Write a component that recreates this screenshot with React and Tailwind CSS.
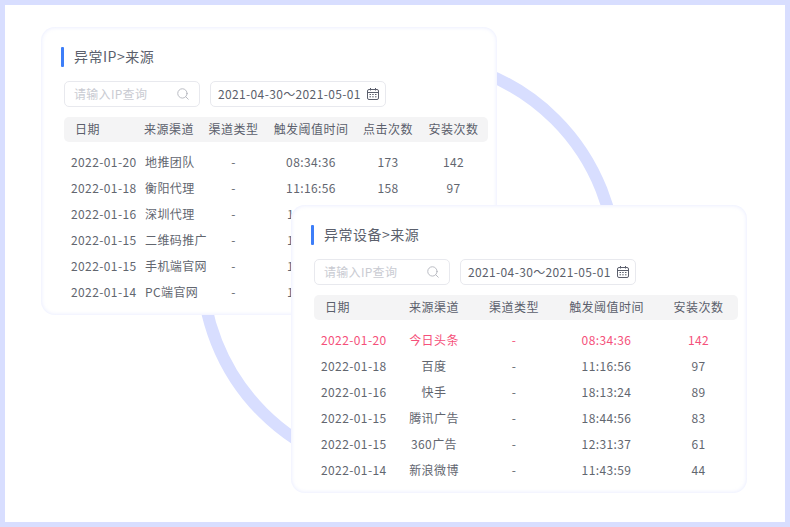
import { Search } from 'lucide-react'

// rows 3-6 of this table sit under the second card, only the first digit of the time shows
const ipRows = [
  ['2022-01-20', '地推团队', '-', '08:34:36', '173', '142'],
  ['2022-01-18', '衡阳代理', '-', '11:16:56', '158', '97'],
  ['2022-01-16', '深圳代理', '-', '1'],
  ['2022-01-15', '二维码推广', '-', '1'],
  ['2022-01-15', '手机端官网', '-', '1'],
  ['2022-01-14', 'PC端官网', '-', '1'],
]

const deviceRows = [
  ['2022-01-20', '今日头条', '-', '08:34:36', '142'],
  ['2022-01-18', '百度', '-', '11:16:56', '97'],
  ['2022-01-16', '快手', '-', '18:13:24', '89'],
  ['2022-01-15', '腾讯广告', '-', '18:44:56', '83'],
  ['2022-01-15', '360广告', '-', '12:31:37', '61'],
  ['2022-01-14', '新浪微博', '-', '11:43:59', '44'],
]

function CalendarIcon() {
  return (
    <svg width="12" height="12" viewBox="0 0 12 12" fill="none" stroke="#5b5f6c" strokeWidth="1">
      <rect x="0.5" y="1.5" width="11" height="10" rx="1.5" />
      <path d="M0.5 4.5h11M3.5 0v2.5M8.5 0v2.5" />
      <path d="M2.5 6.5h1.5M5.2 6.5h1.5M8 6.5h1.5M2.5 8.8h1.5M5.2 8.8h1.5M8 8.8h1.5" />
    </svg>
  )
}

function Toolbar() {
  return (
    <div className="mt-[14px] ml-[3px] flex gap-[10px]">
      <div className="flex h-[26px] w-[136px] items-center justify-between rounded-[5px] border border-[#e8e9ee] pl-[9px] pr-[9px] text-[12px] tracking-[0.3px] text-[#c9cbd2]">
        <span>请输入IP查询</span>
        <Search size={14} strokeWidth={1.5} color="#b0b2ba" />
      </div>
      <div className="flex h-[26px] w-[176px] items-center justify-between rounded-[5px] border border-[#e8e9ee] pl-[7px] pr-[6px] text-[12px] tracking-[0.36px] text-[#5b5f6c]">
        <span className="whitespace-nowrap">2021-04-30～2021-05-01</span>
        <CalendarIcon />
      </div>
    </div>
  )
}

function Title({ children }) {
  return (
    <div className="flex h-5 items-center">
      <div className="h-5 w-[3px] rounded-[1px] bg-[#3d7ef8]" />
      <div className="-mt-[2px] ml-[10px] text-[14px] tracking-[0.5px] text-[#5b5f6c]">{children}</div>
    </div>
  )
}

function IpCard() {
  const cols = 'grid grid-cols-[76px_58px_71px_84px_70px_61px]'
  return (
    <div className="absolute left-[41px] top-[27px] h-[288px] w-[456px] rounded-[14px] bg-white pl-[20px] pt-[20px] shadow-[inset_0_0_4px_rgba(216,222,255,0.7)]">
      <Title>异常IP&gt;来源</Title>
      <Toolbar />
      <div className={`${cols} ml-[3px] mt-[10px] h-[25px] w-[424px] items-center rounded-[5px] bg-[#f4f4f5] pb-[2px] text-center text-[12px] tracking-[0.45px] text-[#5b5f6c]`}>
        <div className="pl-[11px] text-left">日期</div>
        <div className="whitespace-nowrap">来源渠道</div>
        <div className="whitespace-nowrap">渠道类型</div>
        <div className="whitespace-nowrap">触发阈值时间</div>
        <div className="whitespace-nowrap">点击次数</div>
        <div className="whitespace-nowrap">安装次数</div>
      </div>
      <div className="ml-[3px] mt-[7px] w-[424px]">
        {ipRows.map((row) => (
          <div key={row[0] + row[1]} className={`${cols} h-[26px] items-center text-center text-[12px] tracking-[0.4px] text-[#62666f]`}>
            <div className="pl-[7px] text-left">{row[0]}</div>
            <div className="whitespace-nowrap pl-[5px] text-left">{row[1]}</div>
            <div>{row[2]}</div>
            {row.length > 4 ? <div>{row[3]}</div> : <div className="pl-[18px] text-left">{row[3]}</div>}
            {row.length > 4 && <div>{row[4]}</div>}
            {row.length > 4 && <div>{row[5]}</div>}
          </div>
        ))}
      </div>
    </div>
  )
}

function DeviceCard() {
  const cols = 'grid grid-cols-[80px_80px_80px_105px_79px]'
  return (
    <div className="absolute left-[291px] top-[205px] h-[288px] w-[456px] rounded-[14px] bg-white pl-[20px] pt-[20px] shadow-[inset_0_0_4px_rgba(216,222,255,0.7)]">
      <Title>异常设备&gt;来源</Title>
      <Toolbar />
      <div className={`${cols} ml-[3px] mt-[10px] h-[25px] w-[424px] items-center rounded-[5px] bg-[#f4f4f5] pb-[2px] text-center text-[12px] tracking-[0.45px] text-[#5b5f6c]`}>
        <div className="pl-[11px] text-left">日期</div>
        <div>来源渠道</div>
        <div>渠道类型</div>
        <div>触发阈值时间</div>
        <div>安装次数</div>
      </div>
      <div className="ml-[3px] mt-[7px] w-[424px]">
        {deviceRows.map((row, i) => (
          <div key={row[1]} className={`${cols} h-[26px] items-center text-center text-[12px] tracking-[0.4px] ${i === 0 ? 'text-[#f5507a]' : 'text-[#62666f]'}`}>
            <div className="pl-[7px] text-left">{row[0]}</div>
            <div>{row[1]}</div>
            <div>{row[2]}</div>
            <div>{row[3]}</div>
            <div>{row[4]}</div>
          </div>
        ))}
      </div>
    </div>
  )
}

export default function App() {
  return (
    <div className="relative h-[527px] w-[790px] overflow-hidden border-[5px] border-[#d8deff] bg-white font-['Noto_Sans_CJK_SC','Noto_Sans',sans-serif]">
      {/* everything inside is offset by the 5px frame */}
      <div className="absolute -left-[5px] -top-[5px] h-[527px] w-[790px]">
        <div className="absolute left-[196px] top-[53px] h-[426px] w-[426px] rounded-full border-[12px] border-[#d8deff]" />
        <IpCard />
        <DeviceCard />
      </div>
    </div>
  )
}
